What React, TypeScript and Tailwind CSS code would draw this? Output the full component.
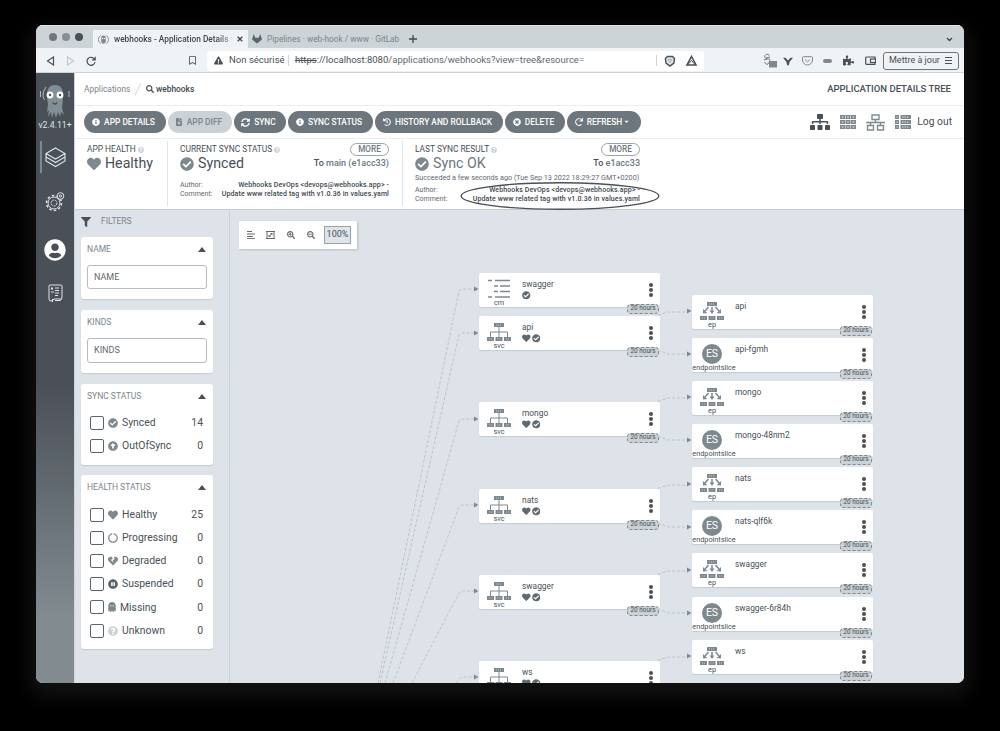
import type { ReactNode } from "react";
import {
  FaCheckCircle, FaCircleNotch, FaFilter, FaGhost, FaHeart, FaHeartBroken,
  FaHistory, FaInfoCircle, FaArrowAltCircleUp, FaPauseCircle, FaPuzzlePiece, FaQuestionCircle,
  FaRedo, FaRegBookmark, FaSearch, FaSearchMinus, FaSearchPlus, FaSitemap, FaSyncAlt, FaTimesCircle,
  FaUserCircle, FaExclamationTriangle, FaFileMedical, FaCaretDown,
} from "react-icons/fa";

const rootEdges = [
  [289, 378], [333, 380], [419, 385], [505, 393], [591, 412], [677, 456],
];
const parents = [
  { name: "swagger", kind: "cm", top: 63 },
  { name: "api", kind: "svc", top: 106 },
  { name: "mongo", kind: "svc", top: 192 },
  { name: "nats", kind: "svc", top: 279 },
  { name: "swagger", kind: "svc", top: 365 },
  { name: "ws", kind: "svc", top: 451 },
];
const children = [
  { name: "api", kind: "ep", top: 85 },
  { name: "api-fgmh", kind: "endpointslice", top: 128 },
  { name: "mongo", kind: "ep", top: 171 },
  { name: "mongo-48nm2", kind: "endpointslice", top: 214 },
  { name: "nats", kind: "ep", top: 257 },
  { name: "nats-qlf6k", kind: "endpointslice", top: 300 },
  { name: "swagger", kind: "ep", top: 343 },
  { name: "swagger-6r84h", kind: "endpointslice", top: 387 },
  { name: "ws", kind: "ep", top: 430 },
];

function TitleTabs() {
  return (
    <div className="flex h-[23px] shrink-0 items-end bg-[#cdd4d8] border-t border-[#dfe4e7]">
      <div className="flex h-[23px] w-[57px] items-center gap-[5px] pl-[13px]">
        <i className="size-2 rounded-full bg-[#6d777d]" />
        <i className="size-2 rounded-full bg-[#838e93]" />
        <i className="size-2 rounded-full bg-[#495057]" />
      </div>
      <div className="flex h-[18px] w-[155px] items-center bg-[#f0f3f5] pl-[5px] text-[8.3px] font-medium text-[#40474d]">
        <svg className="size-[11px]" viewBox="0 0 12 12" fill="none" stroke="#7e898f">
          <path d="M3 1.500Q.5 3 .5 6T3 10.500M9 1.500Q11.500 3 11.500 6T9 10.500" />
          <rect x="3.500" y="1.500" width="5" height="9" rx="2.500" fill="#7e898f" stroke="none" />
          <circle cx="5" cy="5" r=".8" fill="#fff" stroke="none" /><circle cx="7.200" cy="5" r=".8" fill="#fff" stroke="none" />
        </svg>
        <span className="ml-[5px] w-[120px] whitespace-nowrap [mask-image:linear-gradient(90deg,#000_86%,#0006_97%)]">webhooks - Application Details</span>
        <svg className="ml-[3px] size-[6px]" viewBox="0 0 6 6" stroke="#40474d" strokeWidth="1.300"><path d="M.7.700l4.600 4.600M5.300.700L.7 5.300" /></svg>
      </div>
      <div className="flex h-[18px] items-center pl-[4px] text-[8.3px] text-[#7b858b]">
        <svg className="size-[10px]" viewBox="0 0 10 10" fill="#5b656b"><path d="M1.800 0L0 5.500 5 9.600l5-4.100L8.200 0 6.700 3.700H3.300z" /></svg>
        <span className="ml-[5px] w-[134px] whitespace-nowrap">Pipelines · web-hook / www · GitLab</span>
        <svg className="ml-[8px] size-[8px]" viewBox="0 0 8 8" stroke="#40474d" strokeWidth="1.300"><path d="M4 0v8M0 4h8" /></svg>
      </div>
      <svg className="mb-[6px] ml-auto mr-[11px] h-[5px] w-[7px]" viewBox="0 0 7 5" fill="none" stroke="#40474d" strokeWidth="1.300"><path d="M1 1l2.500 2.500L6 1" /></svg>
    </div>
  );
}

function AddressBar() {
  return (
    <div className="flex h-[25px] shrink-0 items-center border-b border-[#cdd4d8] bg-[#f0f3f5] pt-px text-[9.5px] text-[#495057]">
      <svg className="ml-[10px] h-[10px] w-[50px]" viewBox="0 0 50 10" fill="none" stroke="#495057" strokeWidth="1.200">
        <path d="M7.500 1v8L1.500 5z" /><path d="M21.500 1v8l6-4z" stroke="#c0c8cc" />
        <path d="M48.500 3.200A4 4 0 1 0 49 6M49.200.800v3h-3" />
      </svg>
      <FaRegBookmark className="ml-[93px] h-[9px] w-[7px]" />
      <div className="ml-[11px] flex h-[20px] w-[497px] items-center rounded-[3px] bg-white pl-[7px]">
        <FaExclamationTriangle className="size-[9px]" />
        <span className="ml-[6px] w-[55px] whitespace-nowrap tracking-[0.02px]">Non sécurisé</span>
        <i className="ml-[4px] h-[11px] w-px bg-[#cdd4d8]" />
        <span className="ml-[6px] whitespace-nowrap"><s>https</s>://localhost:8080<span className="text-[#5f696f]">/applications/webhooks?view=tree&amp;resource=</span></span>
        <i className="ml-auto h-[11px] w-px bg-[#cdd4d8]" />
        <svg className="ml-[7px] mr-[6px] h-[12px] w-[34px]" viewBox="0 0 34 12" fill="none" stroke="#495057" strokeWidth="1.400">
          <path d="M3.500 1.500h5l2 2-.6 4.500L6 11 2 8l-.600-4.500z" fill="#dde3e6" />
          <path d="M4 4.500h4L6 7.500z" strokeWidth=".7" stroke="#98a2a7" />
          <path d="M27.500 1.500l4.500 8.500h-9z" strokeWidth="1.600" /><path d="M23.500 10l4-4.500 4 4.500" strokeWidth="1" />
        </svg>
      </div>
      <div className="ml-auto mr-[5px] flex items-center">
        <svg className="h-[15px] w-[14px]" viewBox="0 0 14 15" fill="none" stroke="#6d777d">
          <path d="M6.500 2.500Q5 .5 3 1.500T2 4.500 5.500 6 6 9.500 1.500 9M3 5l4-1M1 7l3-1" /><rect x="6" y="8" width="8" height="6.500" fill="#7e898f" stroke="none" />
        </svg>
        <svg className="ml-[6px] h-[10px] w-[10px]" viewBox="0 0 12 10" fill="#495057"><path d="M0 1h3l3 3.500L9 1h3L8 6l-1 4H5L4 6z" /></svg>
        <svg className="ml-[9px] h-[10px] w-[11px]" viewBox="0 0 11 10" fill="none" stroke="#7e898f"><path d="M1.500.700h8q1 0 1 1V4a5 5 0 0 1-10 0V1.700q0-1 1-1zM3 3.500l2.500 2.300L8 3.500" /></svg>
        <i className="ml-[10px] h-[4px] w-[9px] rounded-full bg-[#7e898f]" />
        <FaPuzzlePiece className="ml-[11px] size-[11px]" />
        <svg className="ml-[11px] h-[9px] w-[11px]" viewBox="0 0 11 9" fill="none" stroke="#495057" strokeWidth="1.200"><path d="M10 3V1H1.500Q.7 1 .7 2v5.500q0 .8.800.8H10V6.500" /><rect x="5.500" y="3" width="5" height="3.500" /></svg>
        <div className="ml-[7px] flex h-[18px] w-[76px] items-center justify-between rounded-[3px] border border-[#6d777d] pl-[5px] pr-[6px] text-[9px]">
          <span className="whitespace-nowrap">Mettre à jour</span>
          <svg className="size-[7px]" viewBox="0 0 7 7" stroke="#495057"><path d="M0 .5h7M0 3.500h7M0 6.500h7" /></svg>
        </div>
      </div>
    </div>
  );
}

function Sidebar() {
  return (
    <aside className="flex w-[39px] shrink-0 flex-col items-center border-r border-[#cdd4d8] bg-[linear-gradient(180deg,#495057_0,#495057_310px,#818b90_545px)]">
      <svg className="mt-[10px] h-[36px] w-[32px] shrink-0" viewBox="0 0 32 36">
        <path d="M8 15Q7 2 16 2t8 13l-1 10 2 7-3-3-1 5-2-5-2 6-2-6-2 6-1-6-3 5 1-7-2 2 1-8z" fill="#819097" />
        <path d="M7 4Q4 8 4 12t2 5M1.500 8v6M30 8v6" fill="none" stroke="#aeb8bd" />
        <circle cx="11" cy="12" r="3.400" fill="#fff" /><circle cx="21" cy="12" r="3.400" fill="#fff" />
        <circle cx="11" cy="12" r="1.200" fill="#495057" /><circle cx="21" cy="12" r="1.200" fill="#495057" />
        <path d="M13.500 19.500q2.500 3 4.500 0" fill="none" stroke="#495057" strokeWidth="1.500" />
      </svg>
      <div className="-mt-px h-[14px] whitespace-nowrap text-[8.7px] leading-[14px] text-[#dde4ea]">v2.4.11+</div>
      <div className="mt-[9px] flex h-[32px] w-full items-center">
        <i className="ml-[4px] h-[32px] w-[2px] bg-[#7e898f]" />
        <svg className="ml-[3px] size-[21px]" viewBox="0 0 21 21" fill="none" stroke="#dde4ea" strokeWidth="1.100">
          <path d="M10.500 1L20 6.500 10.500 12 1 6.500zM1 6.500v3.500l9.500 5.500L20 10V6.500M1 10v4l9.500 5.500L20 14v-4" />
        </svg>
      </div>
      <svg className="mt-[19px] size-[20px] shrink-0" viewBox="0 0 20 20" fill="none" stroke="#dde4ea">
        <circle cx="9" cy="11" r="3" strokeDasharray="2 1" /><circle cx="9" cy="11" r="6" /><circle cx="9" cy="11" r="7.500" strokeDasharray="2.500 2.200" strokeWidth="1.500" />
        <circle cx="15.500" cy="4" r="3.300" fill="#495057" /><circle cx="15.500" cy="4" r="1.100" />
      </svg>
      <FaUserCircle className="mt-[27px] size-[22px] shrink-0 text-white" />
      <svg className="mt-[23px] h-[19px] w-[15px] shrink-0" viewBox="0 0 15 19" fill="none" stroke="#dde4ea">
        <path d="M1 15V2Q1 1 2 1h11q1 0 1 1v11q0 3-2 3.500H7M1 15q0 2 2 2t3-2h7M4.500 15v3" />
        <path d="M3 4.500h2M4 3v3M3 8h3M7 4h4M7 6.500h4M7 9h4M7 11.500h3" />
      </svg>
    </aside>
  );
}

function Pill({ icon, label, className, muted }: { icon: ReactNode; label: ReactNode; className: string; muted?: boolean }) {
  return (
    <button className={`flex h-[22px] shrink-0 items-center justify-center gap-[4px] whitespace-nowrap rounded-full pr-[3px] text-[8.4px] font-medium ${muted ? "bg-[#cbd2d6] text-[#7b858b]" : "bg-[#6c767c] text-white"} ${className}`}>
      {icon}<span>{label}</span>
    </button>
  );
}

function SmallNet() {
  return (
    <svg className="h-[17px] w-[19px]" viewBox="0 0 19 17" fill="none" stroke="#7e898f" strokeWidth="1.400">
      <path d="M6 1h7v4.500H6zM9.500 5.500v3M0 8.500h19M4.500 8.500v3M14.500 8.500v3M1.500 11.500h6V16h-6zM11.500 11.500h6V16h-6z" />
    </svg>
  );
}

function Grid() {
  return (
    <svg className="h-[14px] w-[16px]" viewBox="0 0 16 14" fill="#dde4ea" stroke="#7e898f" strokeWidth="1.600">
      <path d="M.8.800h3.400v2.400H.8zM6.300.800h3.400v2.400H6.300zM11.800.800h3.400v2.400h-3.400zM.8 5.800h3.400v2.400H.8zM6.300 5.800h3.400v2.400H6.300zM11.800 5.800h3.400v2.400h-3.400zM.8 10.800h3.400v2.400H.8zM6.300 10.800h3.400v2.400H6.300zM11.800 10.800h3.400v2.400h-3.400z" />
    </svg>
  );
}

function Rows() {
  return (
    <svg className="h-[14px] w-[16px]" viewBox="0 0 16 14" fill="#7e898f">
      <path d="M0 0h4v4H0zM5.500 0H16v4H5.500zM0 5h4v4H0zM5.500 5H16v4H5.500zM0 10h4v4H0zM5.500 10H16v4H5.500z" />
      <path d="M1.500 2h1.500M7 2h7.500M1.500 7h1.500M7 7h7.500M1.500 12h1.500M7 12h7.500" stroke="#fff" strokeWidth=".7" strokeDasharray="1.500 1" />
    </svg>
  );
}

function Header() {
  return (
    <>
      <div className="flex h-[33px] shrink-0 items-center border-b border-[#e9edf0] pl-[9px] pr-[13px] text-[8.400px]">
        <span className="w-[46px] text-[#7b858b]">Applications</span>
        <svg className="ml-[4px] h-[14px] w-[8px]" viewBox="0 0 8 14" stroke="#cdd4d8"><path d="M1 13L7 1" /></svg>
        <FaSearch className="ml-[4px] size-[8px] text-[#495057]" />
        <span className="ml-[2px] font-medium text-[#40474d]">webhooks</span>
        <span className="ml-auto text-[9.5px] font-medium text-[#495057]">APPLICATION DETAILS TREE</span>
      </div>
      <div className="flex h-[33px] shrink-0 items-center gap-[2px] border-b border-[#e9edf0] pl-[9px] pr-[12px]">
        <Pill className="w-[82px]" icon={<FaInfoCircle className="size-[8px]" />} label="APP DETAILS" />
        <Pill className="w-[64px]" muted icon={<FaFileMedical className="size-[8px]" />} label="APP DIFF" />
        <Pill className="w-[52px]" icon={<FaSyncAlt className="size-[9px]" />} label="SYNC" />
        <Pill className="w-[85px]" icon={<FaInfoCircle className="size-[8px]" />} label="SYNC STATUS" />
        <Pill className="w-[128px]" icon={<FaHistory className="size-[8px]" />} label="HISTORY AND ROLLBACK" />
        <Pill className="w-[60px]" icon={<FaTimesCircle className="size-[8px]" />} label="DELETE" />
        <Pill className="w-[74px]" icon={<FaRedo className="size-[8px]" />} label={<span className="flex items-center">REFRESH<FaCaretDown className="ml-px size-[7px]" /></span>} />
        <div className="ml-auto flex items-center text-[#7e898f]">
          <FaSitemap className="mr-[10px] h-[16px] w-[20px] text-[#495057]" />
          <Grid />
          <span className="ml-[10px] mr-[10px]"><SmallNet /></span>
          <Rows />
          <span className="ml-[6px] whitespace-nowrap text-[10.3px] text-[#495057]">Log out</span>
        </div>
      </div>
    </>
  );
}

function Meta({ label, children: value }: { label: string; children: ReactNode }) {
  return (
    <div className="flex h-[9px] items-center justify-between whitespace-nowrap text-[7px] leading-[9px]">
      <span className="text-[#5f696f]">{label}</span>
      <span className="font-medium tracking-[0.12px] text-[#40474d]">{value}</span>
    </div>
  );
}

function SectionTitle({ text, more }: { text: string; more?: boolean }) {
  return (
    <div className="flex h-[13px] items-center whitespace-nowrap text-[8.4px] text-[#495057]">
      {text}<FaQuestionCircle className="ml-[2px] size-[6px] text-[#cbd2d6]" />
      {more && <span className="ml-auto flex h-[13px] w-[39px] items-center justify-center rounded-full border border-[#98a2a7] text-[8.2px] font-medium text-[#6d777d]">MORE</span>}
    </div>
  );
}

function Status() {
  return (
    <div className="flex h-[71px] shrink-0 border-b border-[#c6ced3] text-[#495057]">
      <section className="mb-[3px] mt-[2px] w-[93px] border-r border-[#dde4ea] pl-[12px] pt-[2px]">
        <SectionTitle text="APP HEALTH" />
        <div className="flex h-[15px] items-center gap-[4px] text-[14.2px]"><FaHeart className="size-[14px] text-[#7e898f]" />Healthy</div>
      </section>
      <section className="mb-[3px] mt-[2px] w-[235px] border-r border-[#dde4ea] pl-[12px] pr-[13px] pt-[2px]">
        <SectionTitle text="CURRENT SYNC STATUS" more />
        <div className="flex h-[15px] items-center gap-[4px] text-[14.2px]"><FaCheckCircle className="size-[14px] text-[#7e898f]" />Synced<span className="ml-auto text-[9px] font-medium">To <span className="text-[#6d777d]">main (e1acc33)</span></span></div>
        <div className="mt-[10px]"><Meta label="Author:">Webhooks DevOps &lt;devops@webhooks.app&gt; -</Meta>
          <Meta label="Comment:">Update www related tag with v1.0.36 in values.yaml</Meta></div>
      </section>
      <section className="relative mb-[3px] mt-[2px] w-[237px] pl-[12px] pt-[2px]">
        <SectionTitle text="LAST SYNC RESULT" more />
        <div className="flex h-[15px] items-center gap-[4px] text-[14.2px] text-[#6d777d]"><FaCheckCircle className="size-[14px] text-[#7e898f]" />Sync OK<span className="ml-auto text-[9px] font-medium text-[#6d777d]"><span className="text-[#495057]">To</span> e1acc33</span></div>
        <div className="mt-[3px] flex h-[9px] items-center whitespace-nowrap text-[7.2px] text-[#5f696f]">Succeeded a few seconds ago (Tue Sep 13 2022 18:29:27 GMT+0200)</div>
        <div className="mt-[3px]"><Meta label="Author:">Webhooks DevOps &lt;devops@webhooks.app&gt; -</Meta>
          <Meta label="Comment:">Update www related tag with v1.0.36 in values.yaml</Meta></div>
        <svg className="absolute left-[57px] top-[41px] h-[29px] w-[200px]" viewBox="0 0 200 29" fill="none" stroke="#495057" strokeWidth="1.400"><ellipse cx="100" cy="14" rx="98.800" ry="13.300" /></svg>
      </section>
    </div>
  );
}

function Card({ title, className, children: body }: { title: string; className: string; children: ReactNode }) {
  return (
    <section className={`shrink-0 rounded-[3px] bg-white px-[6px] shadow-[0_1px_1px_#c3cbd0] ${className}`}>
      <div className="flex h-[24px] items-center justify-between pr-[1px] text-[8.500px] text-[#7b858b]">
        {title}
        <svg className="h-[5px] w-[8px]" viewBox="0 0 8 5" fill="#495057"><path d="M4 0l4 5H0z" /></svg>
      </div>
      {body}
    </section>
  );
}

function Option({ icon, label, count }: { icon: ReactNode; label: string; count: number }) {
  return (
    <div className="flex h-[23.2px] items-center pl-[3px] pr-[4px] text-[10.4px] text-[#495057]">
      <i className="size-[14px] rounded-[2px] border-[1.5px] border-[#5b656b]" />
      <span className="ml-[4px] text-[10px] text-[#7e898f]">{icon}</span>
      <span className="ml-[4px] mr-auto">{label}</span>{count}
    </div>
  );
}

function Filters() {
  return (
    <div className="flex w-[155px] shrink-0 flex-col border-r border-[#cdd4d8] pl-[6px] pr-[16px]">
      <div className="flex h-[27px] shrink-0 items-center pb-[4px] text-[8.500px] text-[#7b858b]"><FaFilter className="size-[10px] text-[#495057]" /><span className="ml-[10px]">FILTERS</span></div>
      <Card title="NAME" className="h-[62px]"><div className="mt-[4px] flex h-[24px] items-center rounded-[3px] border border-[#b4bec3] pl-[6px] pt-px text-[9px] text-[#5f696f]">NAME</div></Card>
      <Card title="KINDS" className="mt-[11px] h-[63px]"><div className="mt-[4px] flex h-[25px] items-center rounded-[3px] border border-[#b4bec3] pl-[6px] pt-px text-[9px] text-[#5f696f]">KINDS</div></Card>
      <Card title="SYNC STATUS" className="mt-[11px] h-[81px]">
        <div className="pt-[3px]">
          <Option icon={<FaCheckCircle />} label="Synced" count={14} />
          <Option icon={<FaArrowAltCircleUp />} label="OutOfSync" count={0} />
        </div>
      </Card>
      <Card title="HEALTH STATUS" className="mt-[10px] h-[174px]">
        <div className="pt-[4px]">
          <Option icon={<FaHeart />} label="Healthy" count={25} />
          <Option icon={<FaCircleNotch />} label="Progressing" count={0} />
          <Option icon={<FaHeartBroken />} label="Degraded" count={0} />
          <Option icon={<FaPauseCircle className="text-[#5b656b]" />} label="Suspended" count={0} />
          <Option icon={<FaGhost className="w-[8px]" />} label="Missing" count={0} />
          <Option icon={<FaQuestionCircle className="text-[#cbd2d6]" />} label="Unknown" count={0} />
        </div>
      </Card>
    </div>
  );
}

function KindIcon({ kind }: { kind: string }) {
  if (kind === "endpointslice") {
    return <span className="flex size-[20px] items-center justify-center rounded-full bg-[#7e898f] text-[10.500px] text-white">ES</span>;
  }
  if (kind === "cm") {
    return <svg className="h-[20px] w-[22px]" viewBox="0 0 22 20" stroke="#7e898f" strokeWidth="1.300"><path d="M0 1.500h4M7 1.500h15M6 7h4M12 7h10M6 12.500h4M12 12.500h10M0 18h4M7 18h15" /></svg>;
  }
  return (
    <svg className="h-[18px] w-[24px]" viewBox="0 0 24 18" fill="#7e898f">
      <path d="M7 0h10v4H7zM0 14h7v4H0zM8.500 14h7v4h-7zM17 14h7v4h-7z" />
      {kind === "svc"
        ? <path d="M12 4v10M3.500 14V9h17v5" fill="none" stroke="#7e898f" />
        : <><path d="M8.500 5L5 9M12 5v4M15.500 5L19 9" fill="none" stroke="#7e898f" strokeWidth="1.500" /><path d="M3 11.500V7l4.300 4zM9.500 8.500h5L12 12zM21 11.500V7l-4.300 4z" /></>}
      <path d="M9 2h6M2 16h3M10.500 16h3M19 16h3" stroke="#dde4ea" strokeWidth=".7" strokeDasharray="1 1" />
    </svg>
  );
}

function Node({ name, kind, top, className }: { name: string; kind: string; top: number; className: string }) {
  const parent = kind === "svc" || kind === "cm";
  return (
    <div className={`absolute flex h-[34px] w-[181px] rounded-[2px] bg-white shadow-[0_1px_1px_#c3cbd0] ${className}`} style={{ top }}>
      <div className="flex w-[40px] flex-col items-center pt-[6px]">
        <div className="flex h-[21px] items-center justify-center"><KindIcon kind={kind} /></div>
        <span className={`whitespace-nowrap text-[7.300px] leading-[8px] text-[#495057] ${kind === "endpointslice" ? "ml-[4px]" : ""}`}>{kind}</span>
      </div>
      <div className="absolute left-[43px] top-[5px] flex flex-col">
        <span className="whitespace-nowrap text-[8.400px] leading-[12px] text-[#495057]">{name}</span>
        {parent && <span className="mt-px flex gap-[1px] text-[8.500px] text-[#5f696f]">{kind === "svc" && <FaHeart />}<FaCheckCircle /></span>}
      </div>
      <div className="ml-auto mr-[7px] flex flex-col items-center gap-[1px] pt-[10px]">
        <i className="size-[4px] rounded-full bg-[#495057]" /><i className="size-[4px] rounded-full bg-[#495057]" /><i className="size-[4px] rounded-full bg-[#495057]" />
      </div>
      <span className="absolute -bottom-[7px] right-[1px] flex h-[10px] w-[32px] items-center justify-center whitespace-nowrap rounded-[4px] border border-dashed border-[#7e898f] bg-[#cbd2d6] text-[6.400px] text-[#495057]">20 hours</span>
    </div>
  );
}

function Tree() {
  return (
    <div className="relative min-w-0 flex-1 overflow-hidden">
      <svg className="absolute left-0 top-0 h-[473px] w-[734px]" viewBox="230 210 734 473" fill="none" stroke="#bcc4c8" strokeDasharray="3 2">
        {rootEdges.map(([y, x]) => (
          <g key={y}><path d={`M${x} 683L459 ${y + 2}Q461 ${y} 463 ${y}H474`} /><path d={`M474 ${y - 2.5}l4.500 2.500-4.500 2.500z`} fill="#7e898f" stroke="none" /></g>
        ))}
        {parents.slice(1).map((p) => {
          const y = p.top + 227;
          return (
            <g key={p.top}>
              <path d={`M653 ${y - 16}L668 ${y - 21}H688M653 ${y + 15}L668 ${y + 21}H688`} />
              <path d={`M687 ${y - 24.5}l4.500 2.500-4.500 2.500zM687 ${y + 18.5}l4.500 2.500-4.500 2.500z`} fill="#7e898f" stroke="none" />
            </g>
          );
        })}
      </svg>
      {parents.map((n) => <Node key={n.top} {...n} className="left-[249px]" />)}
      {children.map((n) => <Node key={n.top} {...n} className="left-[462px]" />)}
      <div className="absolute left-[9px] top-[11px] flex h-[28px] w-[118px] items-center bg-white pl-[8px] text-[#5f696f] shadow-[1px_1px_2px_#b4bec3]">
        <svg className="size-[8px]" viewBox="0 0 8 8" stroke="#5f696f"><path d="M0 .5h5M0 3h8M0 5.500h6M0 7.700h8" /></svg>
        <svg className="ml-[11px] h-[8px] w-[9px]" viewBox="0 0 9 8" fill="none" stroke="#5f696f"><path d="M0 .5h9M0 7.500h9M1 0v8M8 0v8M3 5.500l3-3M4.500 2.500H6V4M3 4v1.500h1.500" /></svg>
        <FaSearchPlus className="ml-[12px] size-[8px]" />
        <FaSearchMinus className="ml-[12px] size-[8px]" />
        <span className="ml-[9px] flex h-[18px] w-[27px] items-center justify-center border border-[#98a2a7] bg-[#dde4ea] text-[9px] text-[#495057]">100%</span>
      </div>
    </div>
  );
}

export default function App() {
  return (
    <div className="flex h-[731px] w-[1000px] overflow-hidden bg-black pl-[36px] pt-[25px] font-['Roboto','Liberation_Sans',sans-serif]">
      <div className="flex h-[658px] w-[928px] flex-col overflow-hidden rounded-[7px] bg-white shadow-[0_8px_18px_6px_#111]">
        <TitleTabs />
        <AddressBar />
        <div className="flex min-h-0 flex-1">
          <Sidebar />
          <main className="flex min-w-0 flex-1 flex-col">
            <Header />
            <Status />
            <div className="flex min-h-0 flex-1 bg-[#dde3e9]"><Filters /><Tree /></div>
          </main>
        </div>
      </div>
    </div>
  );
}
